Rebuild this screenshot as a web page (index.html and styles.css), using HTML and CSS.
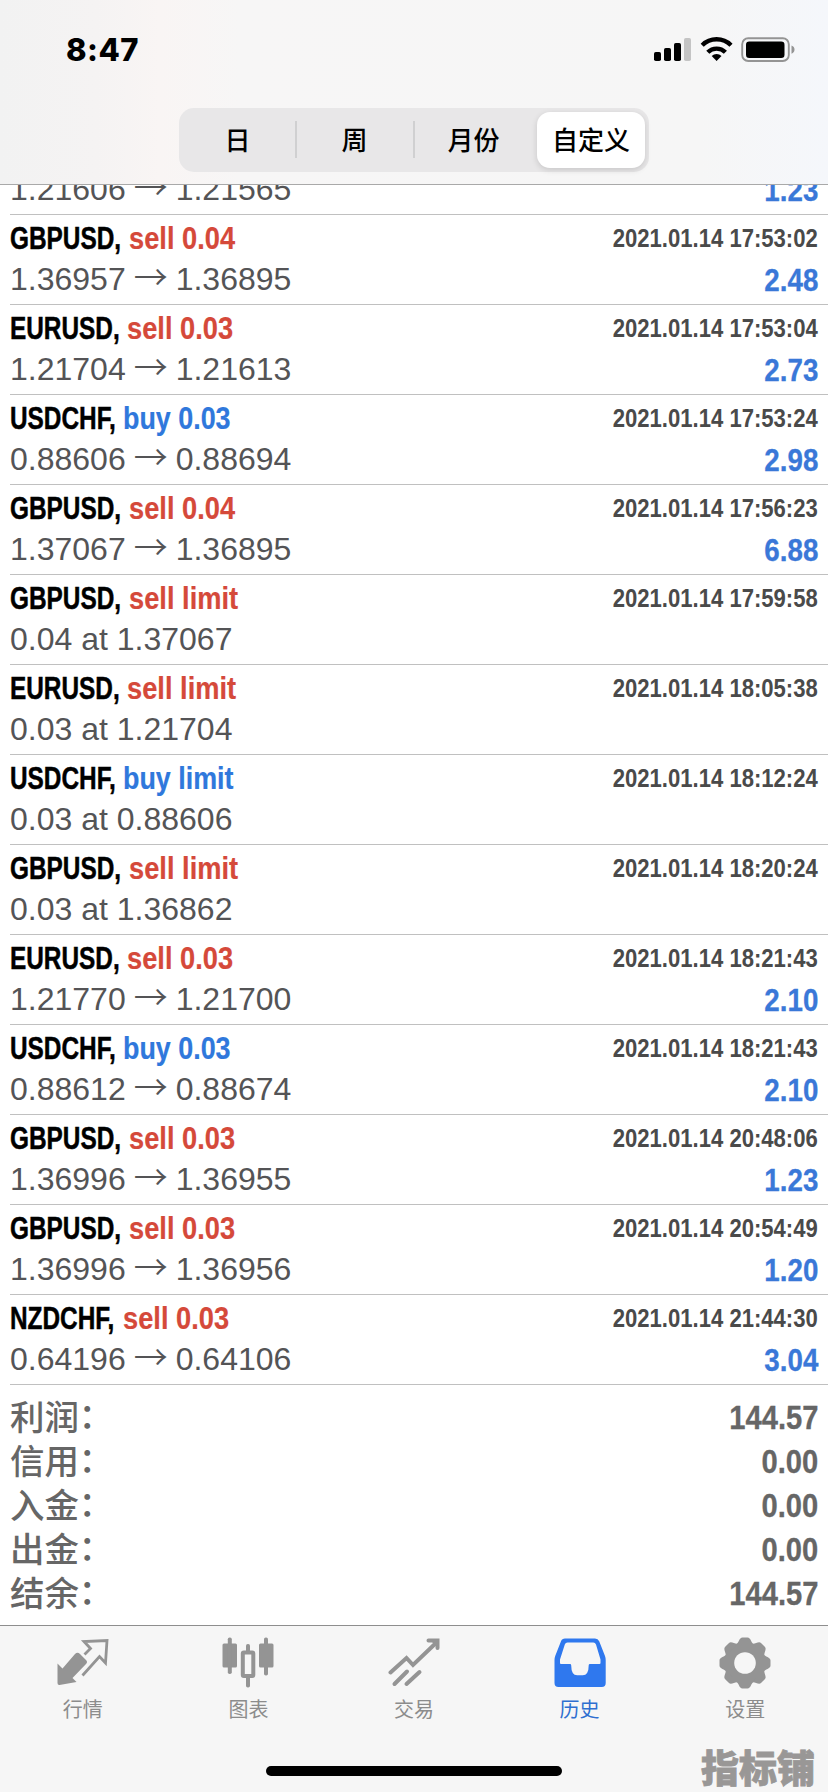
FILE: index.html
```html
<!DOCTYPE html>
<html lang="zh-CN">
<head>
<meta charset="utf-8">
<title>历史</title>
<link rel="stylesheet" href="styles.css">
</head>
<body>
<div class="screen">
  <header class="top">
    <div class="status">
      <div class="clock">8:47</div>
      <svg class="status-icons" width="144" height="26" viewBox="0 0 144 26">
        <rect x="1" y="15" width="7" height="9" rx="1.8"/>
        <rect x="11" y="11" width="7" height="13" rx="1.8"/>
        <rect x="21" y="6" width="7" height="18" rx="1.8"/>
        <rect x="31" y="1" width="7" height="23" rx="1.8" fill="#c4c4c4"/>
        <g fill="none" stroke="#000" stroke-width="4.4">
          <path d="M49.2 8.200a20.500 20.500 0 0 1 28.800 0"/>
          <path d="M54.800 15.200a12.500 12.500 0 0 1 17.600 0"/>
        </g>
        <path d="M63.600 24l-4.900-4.900a7 7 0 0 1 9.800 0z"/>
        <rect x="89.200" y="1.200" width="46.600" height="22.800" rx="6" fill="none" stroke="#949494" stroke-width="1.900"/>
        <rect x="93" y="4.500" width="38.500" height="16.500" rx="3.300"/>
        <path d="M138.500 8.500c4 1.200 4 7 0 8.200z" fill="#949494"/>
      </svg>
    </div>
    <nav class="segments">
      <div class="segment">日</div>
      <div class="segment divided">周</div>
      <div class="segment divided">月份</div>
      <div class="segment selected">自定义</div>
    </nav>
  </header>
  <main class="content">
    <div class="deals" id="deals"></div>
    <dl class="summary">
      <div class="sum"><dt>利润<span class="colon" lang="zh-TW">：</span></dt><dd>144.57</dd></div>
      <div class="sum"><dt>信用<span class="colon" lang="zh-TW">：</span></dt><dd>0.00</dd></div>
      <div class="sum"><dt>入金<span class="colon" lang="zh-TW">：</span></dt><dd>0.00</dd></div>
      <div class="sum"><dt>出金<span class="colon" lang="zh-TW">：</span></dt><dd>0.00</dd></div>
      <div class="sum"><dt>结余<span class="colon" lang="zh-TW">：</span></dt><dd>144.57</dd></div>
    </dl>
  </main>
  <footer class="tabs">
    <div class="tab">
      <svg width="52" height="52" viewBox="0 0 52 52">
        <path fill="#949494" d="M.5 26.500l5 5L18 17q2.500-2.500 5 0l6 6q2 2 0 4L15.500 41l4 4L2.500 48q-2 .2-2-2z"/>
        <path fill="none" stroke="#949494" stroke-width="2.800" d="M27.500 17.500l6-6-6.500-7L50 3.500 48.500 26l-6-6.500L25.500 38.500"/>
      </svg>
      <span>行情</span>
    </div>
    <div class="tab">
      <svg width="52" height="52" viewBox="0 0 52 52" fill="#949494">
        <rect x="0.500" y="6.500" width="14.500" height="24" rx="1.500"/><rect x="5.800" y="0.500" width="4" height="36.500" rx="1.800"/>
        <rect x="37" y="6.500" width="14.500" height="24" rx="1.500"/><rect x="42" y="0.500" width="4" height="38" rx="1.800"/>
        <rect x="20.800" y="15.500" width="10.500" height="23.500" rx="1" fill="none" stroke="#949494" stroke-width="4"/>
        <rect x="24" y="7" width="4" height="8" rx="1.800"/><rect x="24" y="39" width="4" height="11.500" rx="1.800"/>
      </svg>
      <span>图表</span>
    </div>
    <div class="tab">
      <svg width="52" height="52" viewBox="0 0 52 52" fill="none" stroke="#949494" stroke-width="4" stroke-linecap="round">
        <path d="M2.500 35.500L18.500 21l6.500 7L49 5"/>
        <path d="M6.500 47L19 34.500M18.500 47L31.500 35"/>
        <path d="M40.500 3.500H49.500V11"/>
        <path d="M42 3H50V11z" fill="#949494" stroke="none"/>
      </svg>
      <span>交易</span>
    </div>
    <div class="tab active">
      <svg width="52" height="52" viewBox="0 0 52 52">
        <path fill="#2f78ee" fill-rule="evenodd" d="M11 1.500H41q3 0 4.200 2.800L51 19q.7 2 .7 4V46q0 4-4 4H4.500q-4 0-4-4V23q0-2 .7-4L7 4.300Q8 1.500 11 1.500zM13.500 5.500q-2 0-2.700 2L6 22.500V26q0 1 1 1h9q1.200 0 1.200 1.200 0 10 6 10h5.500q6 0 6-10Q34.700 27 36 27h9.500q1 0 1-1v-3.500L42 7.500q-.7-2-2.700-2z"/>
      </svg>
      <span>历史</span>
    </div>
    <div class="tab">
      <svg width="52" height="52" viewBox="-26 -26 52 52">
        <g fill="#949494">
          <circle r="20.500"/>
          <path id="tooth" d="M-9-18.500C-6-20-6-25.500-2.500-25.500h5C6-25.500 6-20 9-18.500z"/>
          <use href="#tooth" transform="rotate(45)"/><use href="#tooth" transform="rotate(90)"/>
          <use href="#tooth" transform="rotate(135)"/><use href="#tooth" transform="rotate(180)"/>
          <use href="#tooth" transform="rotate(225)"/><use href="#tooth" transform="rotate(270)"/>
          <use href="#tooth" transform="rotate(315)"/>
        </g>
        <circle r="10.800" fill="#f6f6f6"/>
      </svg>
      <span>设置</span>
    </div>
    <div class="home-bar"></div>
    <div class="watermark">指标铺</div>
  </footer>
</div>
<script src="app.js"></script>
</body>
</html>
```
FILE: styles.css
```css
* { box-sizing: border-box; }
body { margin: 0; background: #fff; }
.screen {
  width: 828px; height: 1792px; overflow: hidden;
  display: flex; flex-direction: column;
  font-family: "Liberation Sans", "Noto Sans CJK SC", sans-serif;
}
.top {
  flex: none; height: 185px; position: relative; z-index: 1;
  border-bottom: 1px solid #a9a9a9;
  background: linear-gradient(90deg, #f2f2f2 0, #f5f3f3 95px, #f9f5f4 160px, #f7f6f6 240px, #f6f6f6 700px, #f5f7fb 828px);
}
.status {
  height: 108px; padding: 37px 31px 0 66px;
  display: flex; justify-content: space-between; align-items: flex-start;
}
.clock { font: 800 31px/26px Inter, sans-serif; letter-spacing: .5px; }
.segments {
  width: 470px; height: 64px; margin-left: 179px; padding: 4px;
  display: grid; grid-template-columns: 116px 118px 120px 108px;
  background: #e8e7e8; border-radius: 15px;
}
.segment {
  position: relative; display: flex; align-items: center; justify-content: center;
  padding: 0 7px 2px 0;
  font: 500 26px/30px "Noto Sans CJK SC", sans-serif; color: #000;
}
.segment.divided::before {
  content: ""; position: absolute; left: -4px; top: 9px; width: 2px; height: 37px; background: #d0d0d1;
}
.segment.selected {
  padding-right: 0;
  background: #fff; border-radius: 13px; box-shadow: 0 2px 6px rgba(0, 0, 0, .14);
}
.content { height: 1440px; flex: none; overflow: hidden; background: #fff; }
.deals { margin-top: -60px; }
.deal {
  height: 90px; margin-left: 10px; padding: 6px 10px 0 0;
  border-bottom: 1px solid #c0c0c0;
}
.line { height: 40px; display: flex; justify-content: space-between; align-items: flex-start; white-space: nowrap; }
.title {
  display: flex; font-weight: 700; font-size: 32px; line-height: 34px; color: #000;
}
.symbol, .side { transform-origin: 0 0; }
.symbol { transform: scaleX(.762); width: 118.500px; -webkit-text-stroke: .5px currentColor; }
.symbol.eur { width: 117px; }
.symbol.chf { width: 112.500px; }
.side { transform: scaleX(.852); -webkit-text-stroke: .2px currentColor; }
.side.buy { transform: scaleX(.84); }
.sell { color: #d5493a; }
.buy { color: #2f78dc; }
.time {
  padding-top: 2px; font-weight: 700; font-size: 25.500px; line-height: 30px; color: #4a4a4a;
  transform: scaleX(.866); transform-origin: 100% 0;
}
.price { font-size: 32px; line-height: 36px; color: #545456; }
.arrow { display: inline-block; width: 50px; text-align: center; font: 350 34px/20px "Noto Sans CJK SC", sans-serif; }
.profit {
  font-weight: 700; font-size: 31.500px; line-height: 38px; color: #3a78d8;
  transform: scaleX(.88); transform-origin: 100% 0; -webkit-text-stroke: .3px currentColor;
}
.summary { margin: 0; padding: 8px 10px 0; }
.sum { height: 44px; display: flex; justify-content: space-between; align-items: flex-start; color: #666; }
.sum dt { font: 500 34.500px/44px "Noto Sans CJK SC", sans-serif; }
.colon { font-family: "Noto Sans CJK TC", sans-serif; margin-left: -9px; }
.sum dd {
  margin: 0; font-weight: 700; font-size: 33.500px; line-height: 50px;
  transform: scaleX(.87); transform-origin: 100% 0; -webkit-text-stroke: .3px currentColor;
}
.tabs {
  flex: none; height: 167px; position: relative;
  display: grid; grid-template-columns: repeat(5, 1fr);
  border-top: 1px solid #8e8e8e; background: #f6f6f6;
}
.tab {
  display: flex; flex-direction: column; align-items: center; padding-top: 11px;
  color: #8c8c8c; font: 400 20px/30px "Noto Sans CJK SC", sans-serif;
}
.tab svg { margin-bottom: 5px; }
.tab.active { color: #2f6fd0; }
.home-bar {
  position: absolute; left: 266px; top: 140px; width: 296px; height: 10px;
  border-radius: 5px; background: #000;
}
.watermark {
  position: absolute; right: 13px; bottom: 4px;
  font: 900 38px/44px "Noto Sans CJK SC", sans-serif; color: #999796;
  -webkit-text-stroke: .8px currentColor;
}
```
FILE: app.js
```js
// symbol, side, volume or order type, time, price text, profit
const deals = [
  ["", "", "", "", "1.21606 → 1.21565", "1.23"],
  ["GBPUSD", "sell", "0.04", "2021.01.14 17:53:02", "1.36957 → 1.36895", "2.48"],
  ["EURUSD", "sell", "0.03", "2021.01.14 17:53:04", "1.21704 → 1.21613", "2.73"],
  ["USDCHF", "buy", "0.03", "2021.01.14 17:53:24", "0.88606 → 0.88694", "2.98"],
  ["GBPUSD", "sell", "0.04", "2021.01.14 17:56:23", "1.37067 → 1.36895", "6.88"],
  ["GBPUSD", "sell", "limit", "2021.01.14 17:59:58", "0.04 at 1.37067", ""],
  ["EURUSD", "sell", "limit", "2021.01.14 18:05:38", "0.03 at 1.21704", ""],
  ["USDCHF", "buy", "limit", "2021.01.14 18:12:24", "0.03 at 0.88606", ""],
  ["GBPUSD", "sell", "limit", "2021.01.14 18:20:24", "0.03 at 1.36862", ""],
  ["EURUSD", "sell", "0.03", "2021.01.14 18:21:43", "1.21770 → 1.21700", "2.10"],
  ["USDCHF", "buy", "0.03", "2021.01.14 18:21:43", "0.88612 → 0.88674", "2.10"],
  ["GBPUSD", "sell", "0.03", "2021.01.14 20:48:06", "1.36996 → 1.36955", "1.23"],
  ["GBPUSD", "sell", "0.03", "2021.01.14 20:54:49", "1.36996 → 1.36956", "1.20"],
  ["NZDCHF", "sell", "0.03", "2021.01.14 21:44:30", "0.64196 → 0.64106", "3.04"]
];
const widthClass = (symbol) => symbol.endsWith("CHF") ? "chf" : symbol.startsWith("EUR") ? "eur" : "";
document.getElementById("deals").innerHTML = deals.map(([symbol, side, size, time, price, profit]) => `
  <div class="deal">
    <div class="line">${symbol && `
      <div class="title"><div class="symbol ${widthClass(symbol)}">${symbol},</div><div class="side ${side}">${side} ${size}</div></div>
      <div class="time">${time}</div>`}
    </div>
    <div class="line">
      <div class="price">${price.replace(" → ", '<span class="arrow">→</span>')}</div>
      <div class="profit">${profit}</div>
    </div>
  </div>`).join("");
```
